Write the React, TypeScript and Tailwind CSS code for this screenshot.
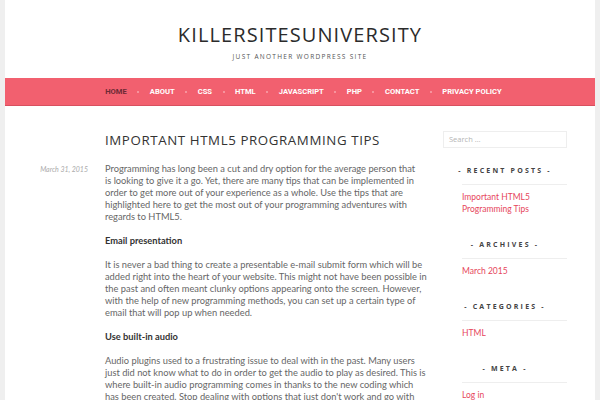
import React from "react";

const navItems = ["HOME", "ABOUT", "CSS", "HTML", "JAVASCRIPT", "PHP", "CONTACT", "PRIVACY POLICY"];

const p1 = [
  "Programming has long been a cut and dry option for the average person that",
  "is looking to give it a go. Yet, there are many tips that can be implemented in",
  "order to get more out of your experience as a whole. Use the tips that are",
  "highlighted here to get the most out of your programming adventures with",
  "regards to HTML5.",
];
const p2 = [
  "It is never a bad thing to create a presentable e-mail submit form which will be",
  "added right into the heart of your website. This might not have been possible in",
  "the past and often meant clunky options appearing onto the screen. However,",
  "with the help of new programming methods, you can set up a certain type of",
  "email that will pop up when needed.",
];
const p3 = [
  "Audio plugins used to a frustrating issue to deal with in the past. Many users",
  "just did not know what to do in order to get the audio to play as desired. This is",
  "where built-in audio programming comes in thanks to the new coding which",
  "has been created. Stop dealing with options that just don't work and go with",
];

function Para({ lines }: { lines: string[] }) {
  return (
    <p>
      {lines.map((l) => (
        <span key={l} className="block whitespace-nowrap">
          {l}
        </span>
      ))}
    </p>
  );
}

function Widget({ title, links }: { title: string; links: string[] }) {
  return (
    <div className="mb-[24px]">
      <div className="text-center text-[7px] leading-[12px] font-bold tracking-[2.2px] text-[#444]" style={{ fontFamily: '"Open Sans", sans-serif' }}>
        - {title} -
      </div>
      <ul className="ml-[19px] mt-[7px] border-t border-[#eeeeee] pt-[6px]">
        {links.map((l) => (
          <li key={l} className="text-[8.5px] leading-[12px] text-[#e6465c]">
            {l}
          </li>
        ))}
      </ul>
    </div>
  );
}

export default function App() {
  return (
    <div className="h-[400px] w-[600px] overflow-hidden bg-[#efefef] px-[5px]" style={{ fontFamily: 'Lato, "Open Sans", sans-serif' }}>
      <div className="h-full bg-white">
        <header className="pt-[24px] text-center">
          <h1 className="text-[20px] leading-[22px] tracking-[1.1px] text-[#2b2b2b]" style={{ fontFamily: '"Open Sans", sans-serif' }}>
            KILLERSITESUNIVERSITY
          </h1>
          <p className="mt-[7px] text-[6.5px] leading-[8px] tracking-[1.3px] text-[#555]" style={{ fontFamily: '"Open Sans", sans-serif' }}>
            JUST ANOTHER WORDPRESS SITE
          </p>
        </header>
        <nav className="mt-[17px] flex h-[28px] items-center justify-center border-b border-[#d8505f] bg-[#f2606f] pl-[7px]" style={{ fontFamily: 'Roboto, sans-serif' }}>
          {navItems.map((item, i) => (
            <React.Fragment key={item}>
              {i > 0 && (
                <span className="mx-[10.5px] h-[2px] w-[2px] rounded-full bg-[#f8a4ad]" />
              )}
              <span className={`text-[7.6px] font-bold ${i === 0 ? "text-[#6d2a35]" : "text-white"}`}>{item}</span>
            </React.Fragment>
          ))}
        </nav>
        <div className="flex">
          <div className="w-[83px] shrink-0 pt-[57px] text-right text-[7px] italic leading-[12px] text-[#aaaaaa]">
            March 31, 2015
          </div>
          <article className="ml-[17px] w-[314px] shrink-0">
            <h2 className="mt-[24px] text-[13.3px] leading-[20px] tracking-[0.6px] text-[#333]" style={{ fontFamily: '"Open Sans", sans-serif' }}>
              IMPORTANT HTML5 PROGRAMMING TIPS
            </h2>
            <div className="mt-[13px] text-[9.3px] leading-[12px] text-[#666666]">
              <Para lines={p1} />
              <p className="mt-[12px] font-bold text-[#333]">Email presentation</p>
              <div className="mt-[12px]">
                <Para lines={p2} />
              </div>
              <p className="mt-[12px] font-bold text-[#333]">Use built-in audio</p>
              <div className="mt-[12px]">
                <Para lines={p3} />
              </div>
            </div>
          </article>
          <aside className="ml-[24px] w-[124px] shrink-0 pt-[25px]">
            <div className="mb-[17px] flex h-[17px] items-center border border-[#eeeeee] px-[5px] text-[7.5px] text-[#b5b5b5]" style={{ fontFamily: '"Open Sans", sans-serif' }}>
              Search …
            </div>
            <Widget title="RECENT POSTS" links={["Important HTML5", "Programming Tips"]} />
            <Widget title="ARCHIVES" links={["March 2015"]} />
            <Widget title="CATEGORIES" links={["HTML"]} />
            <Widget title="META" links={["Log in"]} />
          </aside>
        </div>
      </div>
    </div>
  );
}
